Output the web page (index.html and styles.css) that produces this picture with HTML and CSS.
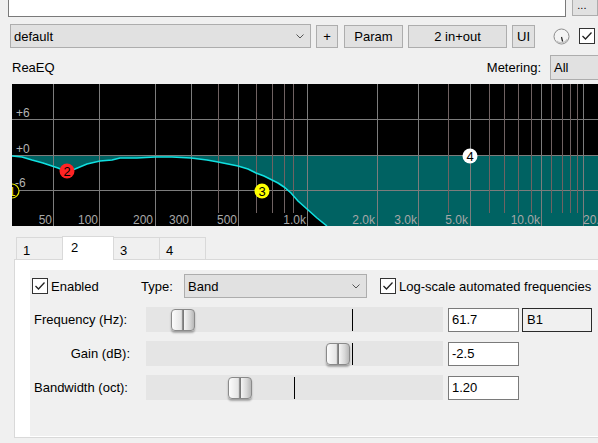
FILE: index.html
```html
<!DOCTYPE html>
<html lang="en">
  <head>
    <meta charset="UTF-8" />
    <title>ReaEQ</title>
    <link rel="stylesheet" href="styles.css">
  </head>
  <body>
    <!-- 插件路径 -->
    <div class="path-row">
      <div class="path-field"></div>
      <div class="browse-btn">...</div>
    </div>

    <!-- 预设 / 参数按钮 -->
    <div class="preset-row">
      <div class="combo preset-combo">
        <span>default</span>
        <svg class="chevron" width="8" height="5" viewBox="0 0 8 5"><polyline points="0.5,0.5 4,4 7.5,0.5" /></svg>
      </div>
      <div class="btn btn-add">+</div>
      <div class="btn btn-param">Param</div>
      <div class="btn btn-io">2 in+out</div>
      <div class="btn btn-ui">UI</div>
      <svg class="knob" width="17" height="17" viewBox="0 0 17 17">
        <circle cx="8.5" cy="8.5" r="7.5" fill="#f4f4f4" stroke="#8c8c8c" />
        <path d="M3.5 13 A7 7 0 0 0 14.5 11" fill="none" stroke="#c4c4c4" stroke-width="1.5" />
        <line x1="8.5" y1="9" x2="9.6" y2="13.5" stroke="#222" stroke-width="1.2" />
      </svg>
      <div class="check bypass-check">
        <svg width="14" height="14" viewBox="0 0 14 14"><polyline points="2.5,7 5.5,10 11.5,3.5" /></svg>
      </div>
    </div>

    <div class="title-row">
      <span class="plugin-name">ReaEQ</span>
      <span class="metering-label">Metering:</span>
      <div class="combo metering-combo">All</div>
    </div>

    <!-- 频响曲线 -->
    <svg class="eq-graph" width="586" height="142" viewBox="0 0 586 142">
      <path class="eq-fill" d="M0,71 L586,71 L586,142 L315,142 L305,134 L295,125 L286,117 L279,109 L272,103 L266,99 L260,96 L252,92 L244,89 L236,85 L226,82 L216,80 L206,78 L195,76 L179,74 L160,73 L143,73 L125,74 L108,74 L100,76 L88,77 L75,80 L63,85 L55,88 L46,84 L31,79 L20,76 L10,73 L0,72 Z" />
      <g class="grid">
        <line x1="0" y1="35" x2="586" y2="35" />
        <line x1="0" y1="71" x2="586" y2="71" />
        <line x1="0" y1="106" x2="586" y2="106" />
        <line x1="41" y1="0" x2="41" y2="142" />
        <line x1="87" y1="0" x2="87" y2="142" />
        <line x1="143" y1="0" x2="143" y2="142" />
        <line x1="179" y1="0" x2="179" y2="142" />
        <line x1="226" y1="0" x2="226" y2="142" />
        <line x1="295" y1="0" x2="295" y2="142" />
        <line x1="365" y1="0" x2="365" y2="142" />
        <line x1="406" y1="0" x2="406" y2="142" />
        <line x1="458" y1="0" x2="458" y2="142" />
        <line x1="529" y1="0" x2="529" y2="142" />
        <line x1="571" y1="0" x2="571" y2="142" />
      </g>
      <g class="grid minor">
        <line x1="206" y1="0" x2="206" y2="129" />
        <line x1="244" y1="0" x2="244" y2="129" />
        <line x1="260" y1="0" x2="260" y2="129" />
        <line x1="272" y1="0" x2="272" y2="129" />
        <line x1="281" y1="0" x2="281" y2="129" />
        <line x1="436" y1="0" x2="436" y2="129" />
        <line x1="477" y1="0" x2="477" y2="129" />
        <line x1="492" y1="0" x2="492" y2="129" />
        <line x1="506" y1="0" x2="506" y2="129" />
        <line x1="519" y1="0" x2="519" y2="129" />
        <line x1="539" y1="0" x2="539" y2="129" />
        <line x1="550" y1="0" x2="550" y2="129" />
        <line x1="558" y1="0" x2="558" y2="129" />
        <line x1="565" y1="0" x2="565" y2="129" />
      </g>
      <polyline class="eq-curve" points="0,72 10,73 20,76 31,79 46,84 55,88 63,85 75,80 88,77 100,76 108,74 125,74 143,73 160,73 179,74 195,76 206,78 216,80 226,82 236,85 244,89 252,92 260,96 266,99 272,103 279,109 286,117 295,125 305,134 315,142" />
      <g class="db-labels">
        <text x="4" y="33">+6</text>
        <text x="4" y="69">+0</text>
        <text x="3" y="103">-6</text>
      </g>
      <g class="hz-labels">
        <text x="40" y="140">50</text>
        <text x="86" y="140">100</text>
        <text x="141" y="140">200</text>
        <text x="177" y="140">300</text>
        <text x="225" y="140">500</text>
        <text x="294" y="140">1.0k</text>
        <text x="363" y="140">2.0k</text>
        <text x="405" y="140">3.0k</text>
        <text x="456" y="140">5.0k</text>
        <text x="528" y="140">10.0k</text>
        <text class="start" x="571" y="140">20.0k</text>
      </g>
      <g class="nodes">
        <circle class="node-off" cx="0" cy="107" r="7" />
        <text class="node-off-text" x="0" y="111.5">1</text>
        <circle cx="55" cy="87" r="7.5" fill="#ff2424" />
        <text x="55" y="91.5">2</text>
        <circle cx="250" cy="107" r="7.5" fill="#ffff00" />
        <text x="250" y="111.5">3</text>
        <circle cx="458" cy="72" r="7.5" fill="#ffffff" />
        <text x="458" y="76.5">4</text>
      </g>
    </svg>

    <!-- 频段标签页 -->
    <div class="tabs">
      <div class="tab">1</div>
      <div class="tab tab-active">2</div>
      <div class="tab">3</div>
      <div class="tab">4</div>
    </div>
    <div class="tab-page">
      <div class="band-panel">
        <div class="band-head">
          <div class="enabled-group">
            <div class="check">
              <svg width="14" height="14" viewBox="0 0 14 14"><polyline points="2.5,7 5.5,10 11.5,3.5" /></svg>
            </div>
            <span>Enabled</span>
          </div>
          <span class="type-label">Type:</span>
          <div class="combo type-combo">
            <span>Band</span>
            <svg class="chevron" width="8" height="5" viewBox="0 0 8 5"><polyline points="0.5,0.5 4,4 7.5,0.5" /></svg>
          </div>
          <div class="check log-check">
            <svg width="14" height="14" viewBox="0 0 14 14"><polyline points="2.5,7 5.5,10 11.5,3.5" /></svg>
          </div>
          <span class="log-label">Log-scale automated frequencies</span>
        </div>

        <div class="param-row">
          <span class="param-label">Frequency (Hz):</span>
          <div class="track">
            <div class="thumb" style="left: 25px"></div>
            <div class="marker" style="left: 206px"></div>
          </div>
          <div class="num-field">61.7</div>
          <div class="band-name">B1</div>
        </div>
        <div class="param-row">
          <span class="param-label right">Gain (dB):</span>
          <div class="track">
            <div class="thumb" style="left: 180px"></div>
            <div class="marker" style="left: 206px"></div>
          </div>
          <div class="num-field">-2.5</div>
        </div>
        <div class="param-row">
          <span class="param-label">Bandwidth (oct):</span>
          <div class="track">
            <div class="thumb" style="left: 82px"></div>
            <div class="marker" style="left: 148px"></div>
          </div>
          <div class="num-field">1.20</div>
        </div>
      </div>
    </div>
  </body>
</html>
```

FILE: styles.css
```css
html,
body {
  margin: 0;
  width: 598px;
  height: 443px;
  overflow: hidden;
  background-color: #f0f0f0;
  font: 13px "Liberation Sans", Arial, sans-serif;
  color: #000;
}

* {
  box-sizing: border-box;
}

/* 顶部路径栏 */
.path-row {
  display: flex;
  height: 17px;
}
.path-field {
  margin-left: 8px;
  width: 566px;
  height: 17px;
  background-color: #fff;
  border: 1px solid #7a7a7a;
  border-top: none;
}
.browse-btn {
  margin-left: 6px;
  width: 26px;
  height: 16px;
  background-color: #e1e1e1;
  border: 1px solid #adadad;
  border-top: none;
  font-size: 11px;
  line-height: 10px;
  padding-left: 4px;
}

.preset-row {
  display: flex;
  align-items: center;
  height: 24px;
  margin-top: 7px;
}
.combo {
  height: 24px;
  display: flex;
  align-items: center;
  justify-content: space-between;
  padding: 0 6px 0 3px;
  background-color: #e1e1e1;
  border: 1px solid #adadad;
}
.chevron polyline {
  fill: none;
  stroke: #555;
  stroke-width: 1;
}
.preset-combo {
  margin-left: 10px;
  width: 301px;
}
.btn {
  height: 23px;
  display: flex;
  align-items: center;
  justify-content: center;
  background-color: #e1e1e1;
  border: 1px solid #adadad;
}
.btn-add {
  margin-left: 5px;
  width: 22px;
}
.btn-param {
  margin-left: 6px;
  width: 59px;
}
.btn-io {
  margin-left: 5px;
  width: 99px;
}
.btn-ui {
  margin-left: 5px;
  width: 23px;
}
.knob {
  display: block;
  margin-left: 18px;
}
.check {
  width: 16px;
  height: 16px;
  flex: none;
  background-color: #fff;
  border: 1px solid #333;
  display: flex;
  align-items: center;
  justify-content: center;
}
.check polyline {
  fill: none;
  stroke: #222;
  stroke-width: 1.3;
}
.bypass-check {
  margin-left: 9px;
}

.title-row {
  display: flex;
  align-items: center;
  width: 620px;
  height: 26px;
  margin-top: 6px;
}
.plugin-name {
  flex: 1;
  margin-left: 12px;
}
.metering-label {
  margin-right: 9px;
}
.metering-combo {
  width: 70px;
  height: 25px;
}

/* 频响图 */
.eq-graph {
  display: block;
  margin: 4px 0 0 12px;
  background-color: #000;
}
.eq-fill {
  fill: #006262;
}
.grid line {
  stroke: #7c7c7c;
  stroke-width: 1;
  shape-rendering: crispEdges;
}
.grid.minor line {
  stroke: #6f6262;
}
.eq-curve {
  fill: none;
  stroke: #10e0e0;
  stroke-width: 1.6;
}
.db-labels text,
.hz-labels text {
  font-family: "Liberation Sans", Arial, sans-serif;
  font-size: 12px;
  fill: #b4b4b4;
}
.hz-labels text {
  text-anchor: end;
  fill: #a8a8a8;
}
.hz-labels text.start {
  text-anchor: start;
}
.nodes text {
  font-family: "Liberation Sans", Arial, sans-serif;
  font-size: 13px;
  text-anchor: middle;
  fill: #000;
}
.nodes .node-off {
  fill: #000;
  stroke: #e8e800;
  stroke-width: 1.2;
}
.nodes .node-off-text {
  fill: #e8e800;
}

/* 标签页 */
.tabs {
  display: flex;
  align-items: flex-end;
  height: 23px;
  margin: 10px 0 0 16px;
}
.tab {
  width: 47px;
  height: 22px;
  padding: 3px 0 0 6px;
  line-height: 19px;
  border: 1px solid #d9d9d9;
  border-bottom: none;
  background-color: #f0f0f0;
}
.tab + .tab {
  margin-left: -1px;
}
.tab-active {
  width: 52px;
  height: 24px;
  padding: 1px 0 0 8px;
  margin-bottom: -1px;
  background-color: #fff;
  position: relative;
  z-index: 1;
}
.tab-page {
  margin-left: 14px;
  width: 600px;
  border: 1px solid #d9d9d9;
  background-color: #fff;
  padding: 10px 0 1px 15px;
}
.band-panel {
  height: 166px;
  padding: 4px 0 0 2px;
  background-color: #f0f0f0;
}
.band-head {
  display: flex;
  align-items: center;
  height: 24px;
}
.enabled-group {
  width: 109px;
  display: flex;
  align-items: center;
}
.enabled-group span {
  margin-left: 3px;
}
.type-label {
  width: 43px;
}
.type-combo {
  width: 183px;
}
.log-check {
  margin-left: 13px;
}
.log-label {
  margin-left: 3px;
  white-space: nowrap;
}

/* 参数滑块 */
.param-row {
  display: flex;
  align-items: center;
  height: 25px;
  margin-top: 9px;
}
.param-label {
  width: 96px;
  margin: 0 16px 0 2px;
  white-space: nowrap;
}
.param-label.right {
  text-align: right;
}
.track {
  position: relative;
  width: 297px;
  height: 25px;
  background-color: #e5e5e5;
}
.thumb {
  position: absolute;
  top: 2px;
  width: 24px;
  height: 22px;
  border: 1px solid #8a8a8a;
  border-radius: 4px;
  background: linear-gradient(to right, #fcfcfc, #e6e6e6 40%, #c9c9c9 47%, #7a7a7a 48%, #7a7a7a 53%, #f4f4f4 55%, #d8d8d8 80%, #b8b8b8);
  box-shadow: 0 2px 2px rgba(0, 0, 0, 0.3);
}
.marker {
  position: absolute;
  top: 2px;
  bottom: 1px;
  width: 1px;
  background-color: #000;
}
.num-field {
  align-self: flex-end;
  margin-left: 5px;
  width: 71px;
  height: 24px;
  padding-left: 3px;
  line-height: 22px;
  background-color: #fff;
  border: 1px solid #7a7a7a;
}
.band-name {
  align-self: flex-end;
  margin-left: 3px;
  width: 70px;
  height: 24px;
  padding-left: 4px;
  line-height: 22px;
  border: 1px solid #2a2a2a;
}
```
